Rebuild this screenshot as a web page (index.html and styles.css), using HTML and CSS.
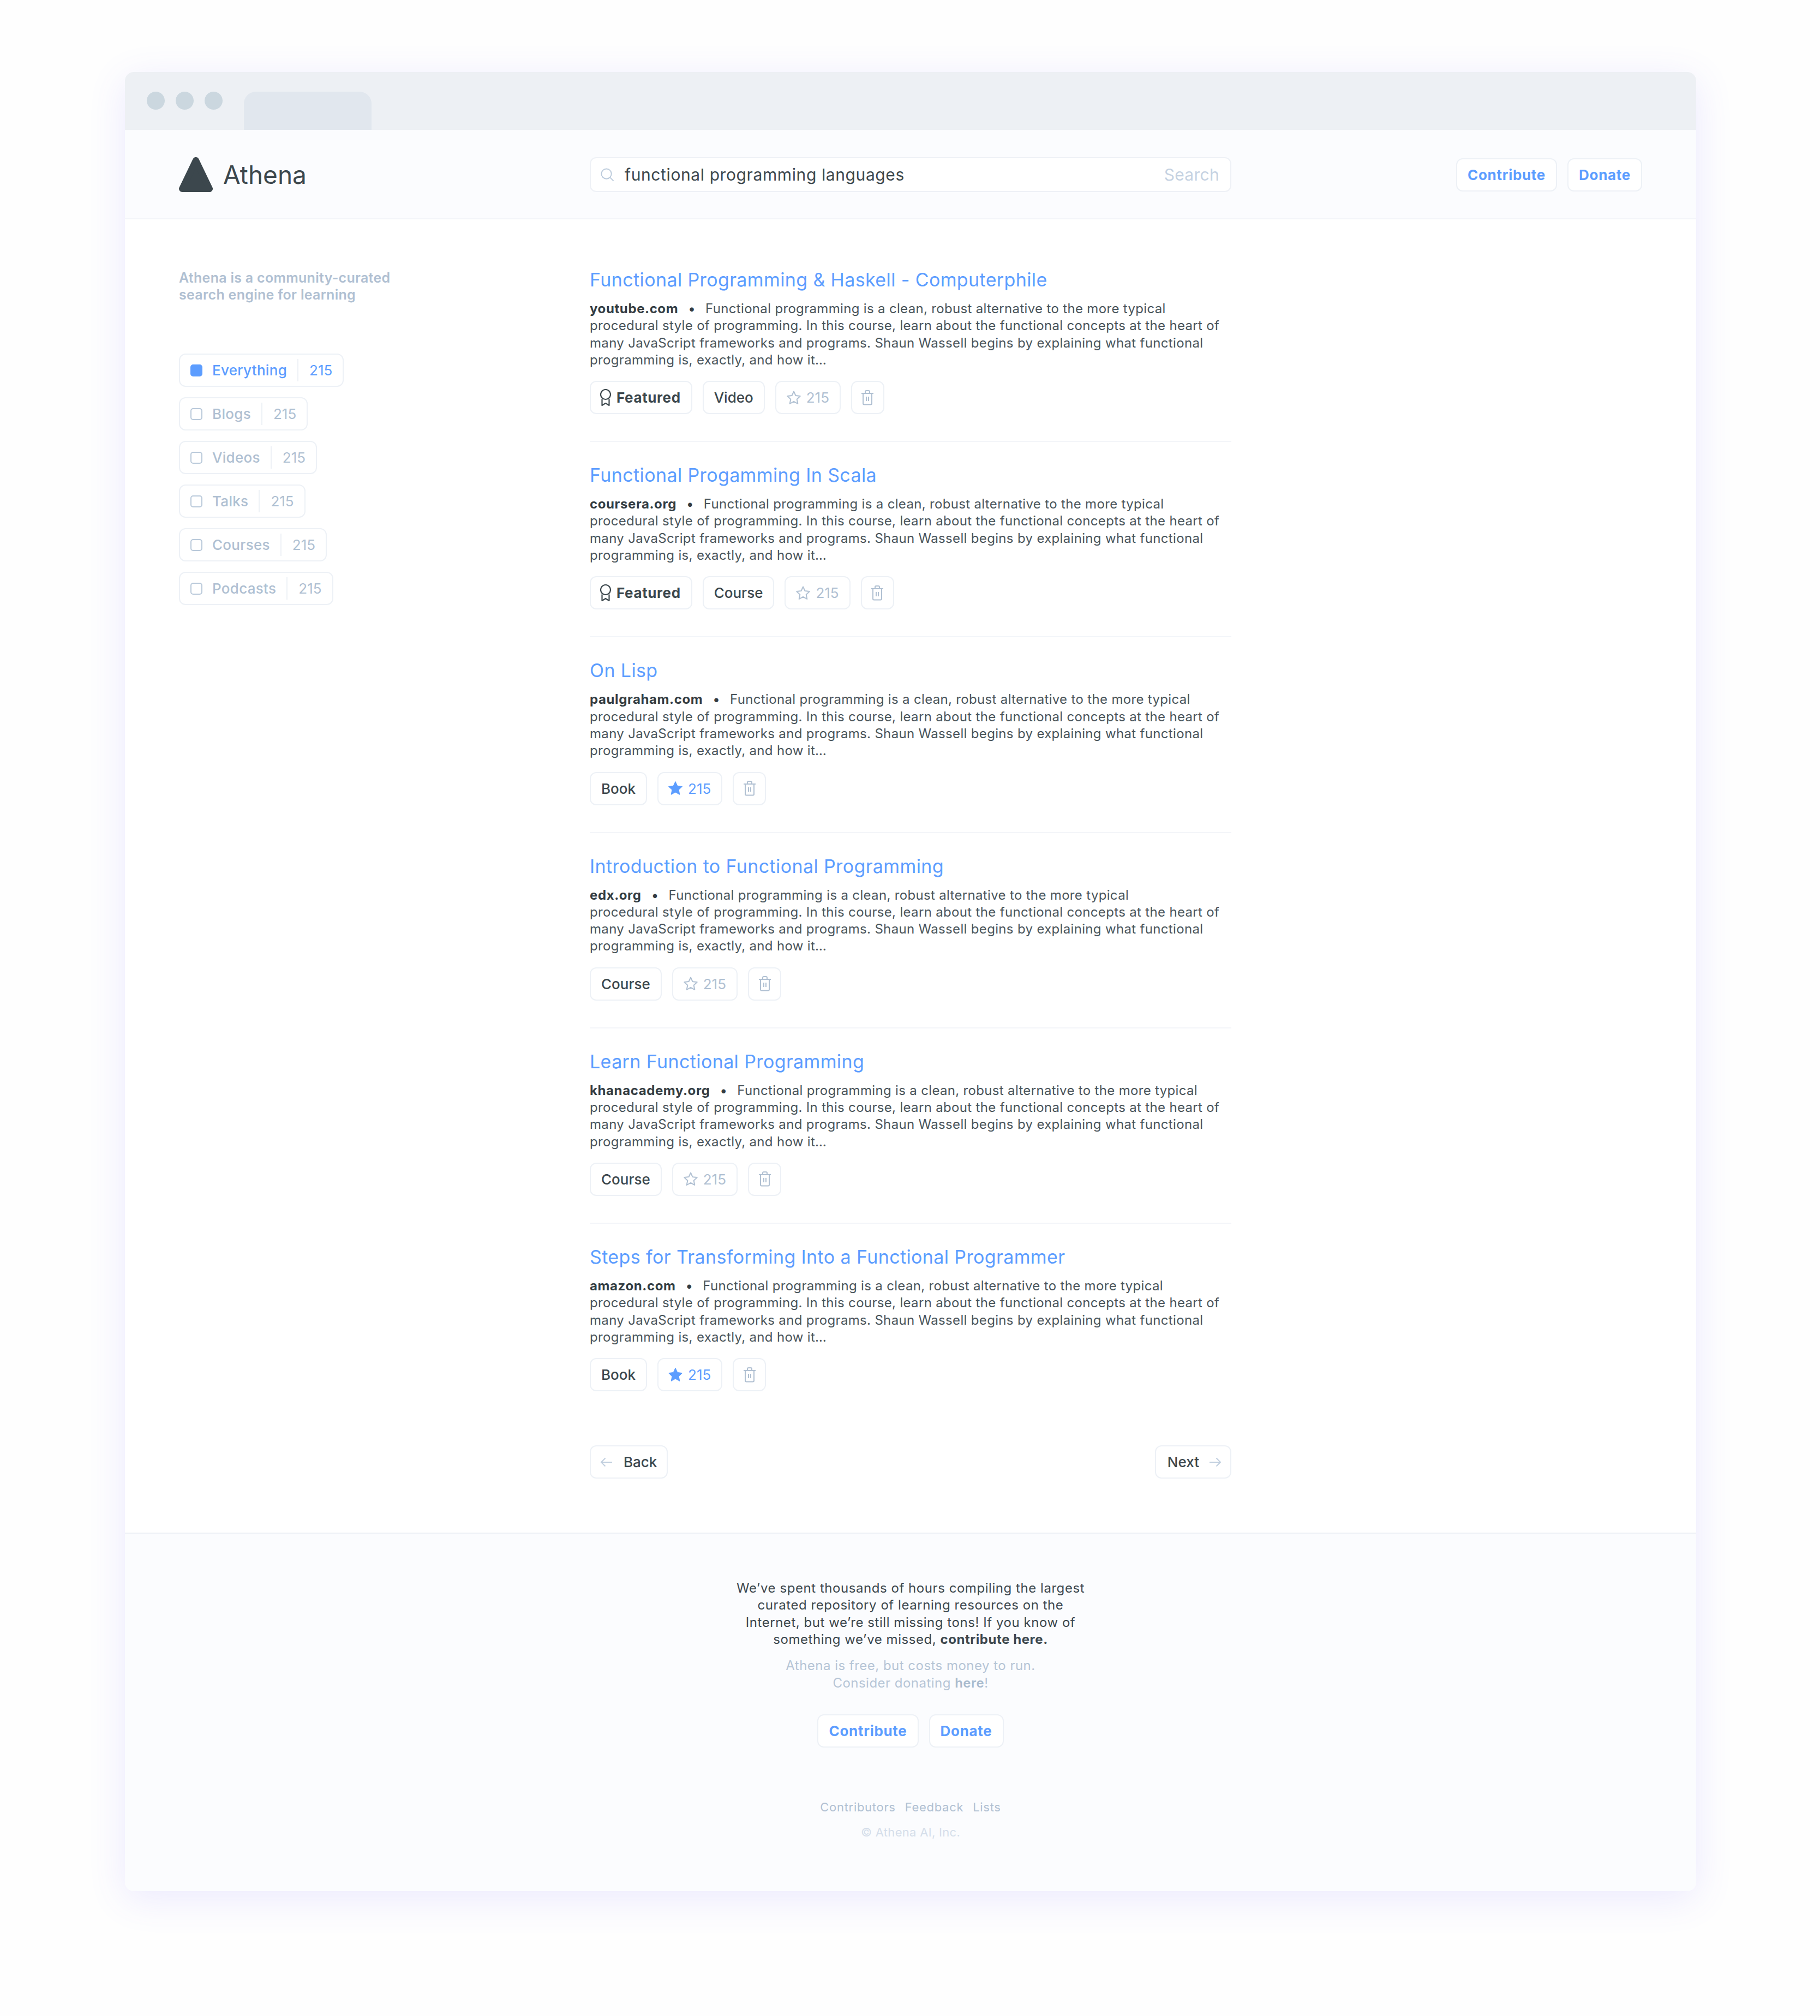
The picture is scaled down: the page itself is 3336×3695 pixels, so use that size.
FILE: index.html
```html
<!DOCTYPE html>
<html lang="en">

<head>
    <meta charset="UTF-8">
    <title>Athena</title>
    <link rel="stylesheet" href="styles.css">
</head>

<body>
    <svg class="sprites" width="0" height="0">
        <symbol id="i-star" viewBox="0 0 28 28">
            <path d="M14 2.500l3.500 7.600 8.200 1-6 5.700 1.600 8.200L14 20.900l-7.300 4.100 1.600-8.200-6-5.700 8.200-1z" fill="none" stroke="currentColor" stroke-width="2" stroke-linejoin="round" />
        </symbol>
        <symbol id="i-star-on" viewBox="0 0 28 28">
            <path d="M14 1.500l3.800 8 8.700 1.100-6.400 6 1.700 8.700-7.800-4.300-7.800 4.300 1.700-8.700-6.400-6 8.700-1.100z" fill="currentColor" stroke="currentColor" stroke-width="1" stroke-linejoin="round" />
        </symbol>
        <symbol id="i-trash" viewBox="0 0 24 28">
            <path d="M1 6h22M4 6v18.500a2 2 0 0 0 2 2h12a2 2 0 0 0 2-2V6M8 6V3a2 2 0 0 1 2-2h4a2 2 0 0 1 2 2v3M10 12v8M14 12v8" fill="none" stroke="currentColor" stroke-width="2" />
        </symbol>
        <symbol id="i-award" viewBox="0 0 20 31">
            <ellipse cx="10" cy="10" rx="9" ry="9" fill="none" stroke="currentColor" stroke-width="2.200" />
            <path d="M3.500 18.500V30l6.500-4 6.500 4V18.500" fill="none" stroke="currentColor" stroke-width="2.200" stroke-linejoin="round" />
        </symbol>
    </svg>

    <div class="window">
        <div class="titlebar">
            <span class="dot"></span>
            <span class="dot"></span>
            <span class="dot"></span>
            <span class="tab"></span>
        </div>

        <header class="header">
            <div class="brand">
                <svg class="logo" viewBox="0 0 62 64">
                    <path d="M31 6L56 58H6z" fill="#3c474d" stroke="#3c474d" stroke-width="12" stroke-linejoin="round" />
                </svg>
                Athena
            </div>
            <div class="search">
                <svg class="search-icon" viewBox="0 0 26 26">
                    <circle cx="11" cy="11" r="9.500" fill="none" stroke="currentColor" stroke-width="2" />
                    <path d="M18 18l6.500 6.500" stroke="currentColor" stroke-width="2" />
                </svg>
                <span class="query">functional programming languages</span>
                <span class="search-label">Search</span>
            </div>
            <div class="actions">
                <a class="chip chip-action">Contribute</a>
                <a class="chip chip-action">Donate</a>
            </div>
        </header>

        <div class="content">
            <aside class="sidebar">
                <p class="tagline">Athena is a community-curated<br>search engine for learning</p>
                <ul class="filters">
                    <li class="filter filter-on"><span class="check"></span><span class="filter-name">Everything</span><span class="filter-count">215</span></li>
                    <li class="filter"><span class="check"></span><span class="filter-name">Blogs</span><span class="filter-count">215</span></li>
                    <li class="filter"><span class="check"></span><span class="filter-name">Videos</span><span class="filter-count">215</span></li>
                    <li class="filter"><span class="check"></span><span class="filter-name">Talks</span><span class="filter-count">215</span></li>
                    <li class="filter"><span class="check"></span><span class="filter-name">Courses</span><span class="filter-count">215</span></li>
                    <li class="filter"><span class="check"></span><span class="filter-name">Podcasts</span><span class="filter-count">215</span></li>
                </ul>
            </aside>

            <main class="results">
                <article class="result">
                    <h2 class="result-title">Functional Programming &amp; Haskell - Computerphile</h2>
                    <p class="result-text"><b>youtube.com</b><span class="bullet">•</span>Functional programming is a clean, robust alternative to the more typical<br>procedural style of programming. In this course, learn about the functional concepts at the heart of<br>many JavaScript frameworks and programs. Shaun Wassell begins by explaining what functional<br>programming is, exactly, and how it…</p>
                    <div class="tags">
                        <span class="chip chip-featured"><svg class="award"><use href="#i-award" /></svg>Featured</span>
                        <span class="chip">Video</span>
                        <span class="chip chip-muted"><svg class="star"><use href="#i-star" /></svg>215</span>
                        <span class="chip chip-trash"><svg class="trash"><use href="#i-trash" /></svg></span>
                    </div>
                </article>

                <article class="result">
                    <h2 class="result-title">Functional Progamming In Scala</h2>
                    <p class="result-text"><b>coursera.org</b><span class="bullet">•</span>Functional programming is a clean, robust alternative to the more typical<br>procedural style of programming. In this course, learn about the functional concepts at the heart of<br>many JavaScript frameworks and programs. Shaun Wassell begins by explaining what functional<br>programming is, exactly, and how it…</p>
                    <div class="tags">
                        <span class="chip chip-featured"><svg class="award"><use href="#i-award" /></svg>Featured</span>
                        <span class="chip">Course</span>
                        <span class="chip chip-muted"><svg class="star"><use href="#i-star" /></svg>215</span>
                        <span class="chip chip-trash"><svg class="trash"><use href="#i-trash" /></svg></span>
                    </div>
                </article>

                <article class="result">
                    <h2 class="result-title">On Lisp</h2>
                    <p class="result-text"><b>paulgraham.com</b><span class="bullet">•</span>Functional programming is a clean, robust alternative to the more typical<br>procedural style of programming. In this course, learn about the functional concepts at the heart of<br>many JavaScript frameworks and programs. Shaun Wassell begins by explaining what functional<br>programming is, exactly, and how it…</p>
                    <div class="tags">
                        <span class="chip">Book</span>
                        <span class="chip chip-starred"><svg class="star"><use href="#i-star-on" /></svg>215</span>
                        <span class="chip chip-trash"><svg class="trash"><use href="#i-trash" /></svg></span>
                    </div>
                </article>

                <article class="result">
                    <h2 class="result-title">Introduction to Functional Programming</h2>
                    <p class="result-text"><b>edx.org</b><span class="bullet">•</span>Functional programming is a clean, robust alternative to the more typical<br>procedural style of programming. In this course, learn about the functional concepts at the heart of<br>many JavaScript frameworks and programs. Shaun Wassell begins by explaining what functional<br>programming is, exactly, and how it…</p>
                    <div class="tags">
                        <span class="chip">Course</span>
                        <span class="chip chip-muted"><svg class="star"><use href="#i-star" /></svg>215</span>
                        <span class="chip chip-trash"><svg class="trash"><use href="#i-trash" /></svg></span>
                    </div>
                </article>

                <article class="result">
                    <h2 class="result-title">Learn Functional Programming</h2>
                    <p class="result-text"><b>khanacademy.org</b><span class="bullet">•</span>Functional programming is a clean, robust alternative to the more typical<br>procedural style of programming. In this course, learn about the functional concepts at the heart of<br>many JavaScript frameworks and programs. Shaun Wassell begins by explaining what functional<br>programming is, exactly, and how it…</p>
                    <div class="tags">
                        <span class="chip">Course</span>
                        <span class="chip chip-muted"><svg class="star"><use href="#i-star" /></svg>215</span>
                        <span class="chip chip-trash"><svg class="trash"><use href="#i-trash" /></svg></span>
                    </div>
                </article>

                <article class="result result-last">
                    <h2 class="result-title">Steps for Transforming Into a Functional Programmer</h2>
                    <p class="result-text"><b>amazon.com</b><span class="bullet">•</span>Functional programming is a clean, robust alternative to the more typical<br>procedural style of programming. In this course, learn about the functional concepts at the heart of<br>many JavaScript frameworks and programs. Shaun Wassell begins by explaining what functional<br>programming is, exactly, and how it…</p>
                    <div class="tags">
                        <span class="chip">Book</span>
                        <span class="chip chip-starred"><svg class="star"><use href="#i-star-on" /></svg>215</span>
                        <span class="chip chip-trash"><svg class="trash"><use href="#i-trash" /></svg></span>
                    </div>
                </article>

                <nav class="pager">
                    <a class="chip chip-back">
                        <svg class="arrow" viewBox="0 0 22 18"><path d="M22 9H2M9.500 1.500L2 9l7.500 7.500" fill="none" stroke="currentColor" stroke-width="2" /></svg>
                        Back
                    </a>
                    <a class="chip chip-next">
                        Next
                        <svg class="arrow" viewBox="0 0 22 18"><path d="M0 9h20M12.500 1.500L20 9l-7.500 7.500" fill="none" stroke="currentColor" stroke-width="2" /></svg>
                    </a>
                </nav>
            </main>
        </div>

        <footer class="footer">
            <p class="footer-main">We’ve spent thousands of hours compiling the largest<br>curated repository of learning resources on the<br>Internet, but we’re still missing tons! If you know of<br>something we’ve missed, <b>contribute here.</b></p>
            <p class="footer-note">Athena is free, but costs money to run.<br>Consider donating <b>here</b>!</p>
            <div class="footer-actions">
                <a class="chip chip-action">Contribute</a>
                <a class="chip chip-action">Donate</a>
            </div>
            <div class="footer-links">
                <a>Contributors</a>
                <a>Feedback</a>
                <a>Lists</a>
            </div>
            <p class="copyright">© Athena AI, Inc.</p>
        </footer>
    </div>
</body>

</html>
```

FILE: styles.css
```css
* {
    box-sizing: border-box;
}

body {
    margin: 0;
    padding: 132px 227px 228px 229px;
    background-color: #fefefe;
    font-family: Inter, "Noto Sans", sans-serif;
    color: #3c474d;
}

p,
h2,
ul {
    margin: 0;
    padding: 0;
}

.sprites {
    display: block;
    height: 0;
}

.window {
    width: 2880px;
    border-radius: 16px;
    background-color: #fff;
    box-shadow: 0 14px 70px rgba(98, 84, 255, 0.12);
    overflow: hidden;
}

.titlebar {
    display: flex;
    align-items: flex-start;
    height: 106px;
    padding: 36px 0 0 40px;
    background-color: #edf0f4;
}

.dot {
    width: 33px;
    height: 33px;
    margin-right: 20px;
    border-radius: 50%;
    background-color: #cbd7df;
}

.tab {
    width: 234px;
    height: 70px;
    margin-left: 19px;
    border-radius: 22px 22px 0 0;
    background-color: #e1e7ee;
}

.header {
    display: flex;
    align-items: center;
    height: 164px;
    padding: 2px 99px 0;
    background-color: #fbfcfe;
    border-bottom: 2px solid #f3f5f9;
}

.brand {
    display: flex;
    align-items: center;
    gap: 19px;
    width: 753px;
    font-size: 46px;
    color: #3c474d;
}

.logo {
    width: 62px;
    height: 64px;
}

.search {
    display: flex;
    align-items: center;
    width: 1176px;
    height: 64px;
    padding: 0 20px 0 18px;
    background-color: #fff;
    border: 2px solid #eef1f6;
    border-radius: 12px;
    font-size: 30px;
}

.search-icon {
    width: 25px;
    height: 25px;
    color: #bccbdc;
}

.query {
    margin-left: 19px;
    letter-spacing: 0.6px;
}

.search-label {
    margin-left: auto;
    color: #c5d2e2;
    letter-spacing: 0.3px;
}

.actions {
    display: flex;
    gap: 19px;
    margin-left: auto;
}

.chip {
    display: inline-flex;
    align-items: center;
    height: 61px;
    padding: 0 19px;
    background-color: #fff;
    border: 2px solid #edf1f6;
    border-radius: 12px;
    font-size: 26px;
    font-weight: 500;
    color: #3c474d;
}

.chip-action {
    font-weight: 700;
    letter-spacing: 0.7px;
    color: #5c9dff;
}

.content {
    display: flex;
}

.sidebar {
    width: 852px;
    padding: 92px 0 0 99px;
}

.tagline {
    font-size: 25px;
    font-weight: 600;
    line-height: 31px;
    letter-spacing: 0.28px;
    color: #b0c0d2;
}

.filters {
    display: flex;
    flex-direction: column;
    align-items: flex-start;
    gap: 19px;
    margin-top: 92px;
    list-style: none;
}

.filter {
    display: flex;
    align-items: center;
    height: 61px;
    padding: 0 19px;
    border: 2px solid #edf1f6;
    border-radius: 12px;
    font-size: 26px;
    font-weight: 500;
    color: #afc0d2;
}

.check {
    width: 22px;
    height: 22px;
    margin-right: 18px;
    border: 2px solid #b9c9da;
    border-radius: 5px;
}

.filter-name {
    padding-right: 19px;
    border-right: 2px solid #edf1f6;
    line-height: 41px;
    letter-spacing: 0.3px;
}

.filter-count {
    margin-left: 20px;
    font-weight: 400;
}

.filter-on {
    color: #5c9dff;
}

.filter-on .check {
    background-color: #5c9dff;
    border-color: #5c9dff;
}

.results {
    width: 1176px;
    padding-top: 90px;
}

.result {
    padding: 0 0 49px;
    margin-bottom: 40px;
    border-bottom: 2px solid #f3f5f9;
}

.result-last {
    margin-bottom: 0;
    border-bottom: 0;
}

.result-title {
    font-size: 34px;
    font-weight: 400;
    line-height: 42px;
    letter-spacing: 0.38px;
    color: #5c9dff;
}

.result-text {
    margin-top: 16px;
    font-size: 24px;
    line-height: 31.3px;
    letter-spacing: 0.33px;
    color: #4a555b;
}

.result-text b {
    font-weight: 700;
    letter-spacing: 0.6px;
    color: #333c42;
}

.bullet {
    margin: 0 18px;
    color: #333c42;
}

.tags {
    display: flex;
    gap: 19px;
    margin-top: 23px;
}

.chip-featured {
    padding-left: 17px;
    font-weight: 700;
    letter-spacing: 0.6px;
}

.award {
    width: 20px;
    height: 31px;
    margin-right: 10px;
    color: #3c474d;
}

.chip-muted {
    padding: 0 19px 0 18px;
    color: #b0c0d2;
    font-weight: 400;
}

.chip-starred {
    padding: 0 19px 0 17px;
    color: #5c9dff;
    font-weight: 400;
}

.star {
    width: 28px;
    height: 28px;
    margin-right: 9px;
}

.chip-trash {
    width: 61px;
    padding: 0;
    justify-content: center;
    color: #b0c0d2;
}

.trash {
    width: 24px;
    height: 28px;
}

.pager {
    display: flex;
    justify-content: space-between;
    margin-top: 50px;
}

.chip-back {
    gap: 21px;
    padding: 0 18px 0 17px;
}

.chip-next {
    gap: 19px;
    padding: 0 16px 0 21px;
}

.arrow {
    width: 22px;
    height: 18px;
    color: #c1cfdf;
}

.footer {
    margin-top: 99px;
    height: 657px;
    padding-top: 84px;
    background-color: #fbfcfe;
    border-top: 2px solid #edf1f6;
    font-size: 24px;
    line-height: 31.3px;
    text-align: center;
}

.footer-main {
    letter-spacing: 0.55px;
}

.footer-main b {
    font-weight: 700;
}

.footer-note {
    margin-top: 17px;
    letter-spacing: 0.48px;
    color: #b6c5d6;
}

.footer-note b {
    font-weight: 600;
    color: #a9bbce;
}

.footer-actions {
    display: flex;
    justify-content: center;
    gap: 19px;
    margin-top: 42px;
}

.footer-links {
    display: flex;
    justify-content: center;
    gap: 17px;
    margin-top: 94px;
    font-size: 22px;
    letter-spacing: 0.7px;
    color: #b0c0d2;
}

.copyright {
    margin-top: 15px;
    font-size: 22px;
    letter-spacing: 0.3px;
    color: #d5deea;
}
```
